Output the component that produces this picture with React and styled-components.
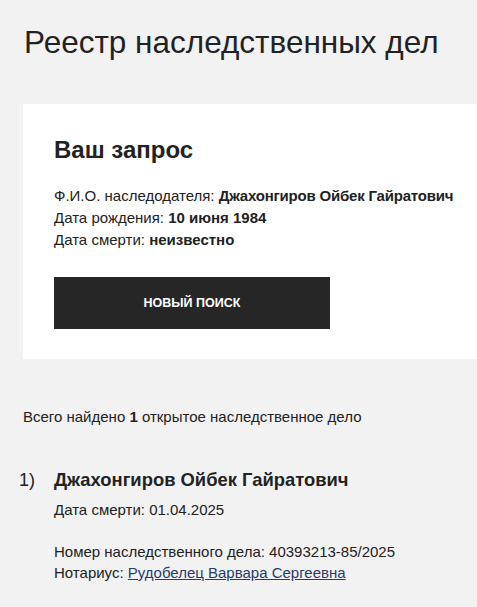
import React from "react";
import styled, { createGlobalStyle } from "styled-components";

const Global = createGlobalStyle`
  html, body { margin: 0; padding: 0; background: #f2f2f2; }
  body { font-family: "Liberation Sans", Arial, sans-serif; color: #222; }
`;

const Page = styled.div`
  padding: 24px 0 30px 23px;
`;

const Title = styled.h1`
  margin: 0 0 0 1px;
  font-size: 31.5px;
  line-height: 36px;
  font-weight: 400;
  color: #222;
`;

const Card = styled.section`
  margin-top: 44px;
  background: #fff;
  padding: 32px 0 30px 31px;
`;

const CardTitle = styled.h2`
  margin: 0;
  font-size: 24px;
  line-height: 28px;
  font-weight: 700;
`;

const InfoList = styled.div`
  margin-top: 21px;
  font-size: 15px;
  line-height: 22px;
  white-space: nowrap;
`;

const Strong = styled.b`
  font-weight: 700;
  letter-spacing: ${(p) => (p.$tight ? "-0.2px" : "0")};
`;

const Button = styled.button`
  display: block;
  margin-top: 26px;
  width: 276px;
  height: 52px;
  border: 0;
  background: #262626;
  color: #fff;
  font-family: inherit;
  font-size: 12.5px;
  font-weight: 700;
  text-transform: uppercase;
  cursor: pointer;
`;

const Summary = styled.p`
  margin: 48px 0 0;
  font-size: 15px;
  line-height: 20px;
`;

const Case = styled.div`
  margin: 41px 0 0 -4px;
  display: grid;
  grid-template-columns: 35px 1fr;
`;

const CaseNum = styled.div`
  font-size: 18px;
  line-height: 24px;
`;

const CaseName = styled.div`
  font-size: 18.4px;
  line-height: 24px;
  font-weight: 700;
`;

const Line = styled.div`
  font-size: 15px;
  line-height: 21px;
  margin-top: ${(p) => p.$gap || 0}px;
`;

const Link = styled.a`
  color: #283b6c;
  text-decoration: underline;
`;

export default function App() {
  return (
    <>
      <Global />
      <Page>
        <Title>Реестр наследственных дел</Title>
        <Card>
          <CardTitle>Ваш запрос</CardTitle>
          <InfoList>
            <div>
              Ф.И.О. наследодателя: <Strong $tight>Джахонгиров Ойбек Гайратович</Strong>
            </div>
            <div>
              Дата рождения: <Strong>10 июня 1984</Strong>
            </div>
            <div>
              Дата смерти: <Strong>неизвестно</Strong>
            </div>
          </InfoList>
          <Button>Новый поиск</Button>
        </Card>
        <Summary>
          Всего найдено <Strong>1</Strong> открытое наследственное дело
        </Summary>
        <Case>
          <CaseNum>1)</CaseNum>
          <div>
            <CaseName>Джахонгиров Ойбек Гайратович</CaseName>
            <Line $gap={7}>Дата смерти: 01.04.2025</Line>
            <Line $gap={21}>Номер наследственного дела: 40393213-85/2025</Line>
            <Line>
              Нотариус: <Link href="#">Рудобелец Варвара Сергеевна</Link>
            </Line>
          </div>
        </Case>
      </Page>
    </>
  );
}
